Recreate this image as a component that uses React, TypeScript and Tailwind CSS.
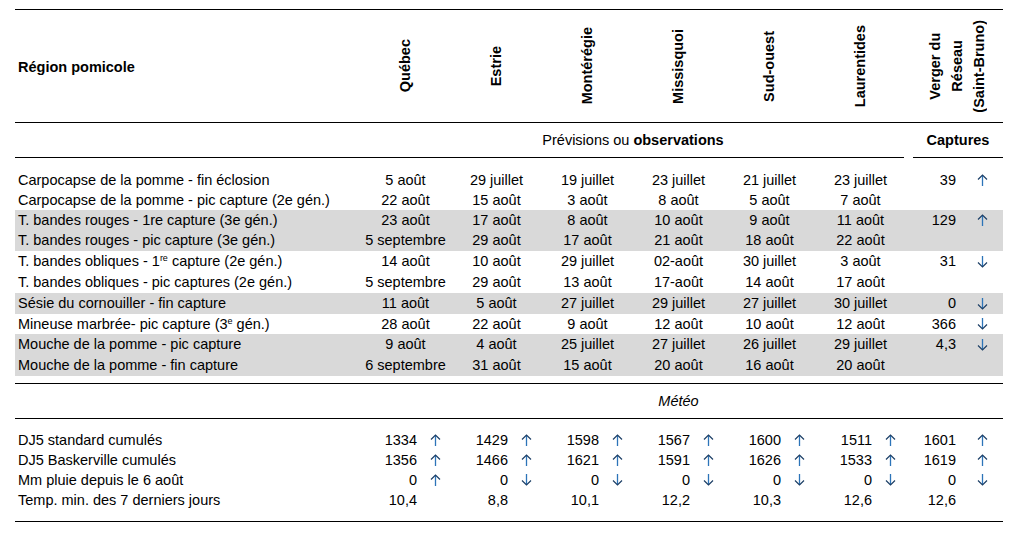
import React from "react";

const COLS = "grid grid-cols-[345px_repeat(6,91px)_97px]";

function Arrow({ dir }: { dir: "up" | "down" }) {
  return (
    <svg width="11" height="12" viewBox="0 0 11 12" className="block">
      {dir === "up" ? (
        <>
          <line x1="5.5" y1="1.2" x2="5.5" y2="12" stroke="#2c74b8" strokeWidth="1.3" />
          <polyline points="1,5.5 5.5,1 10,5.5" fill="none" stroke="#1d3f66" strokeWidth="1.2" />
        </>
      ) : (
        <>
          <line x1="5.5" y1="0" x2="5.5" y2="10.8" stroke="#2c74b8" strokeWidth="1.3" />
          <polyline points="1,6.5 5.5,11 10,6.5" fill="none" stroke="#1d3f66" strokeWidth="1.2" />
        </>
      )}
    </svg>
  );
}

type Row = {
  label: React.ReactNode;
  vals: string[];
  cap?: string;
  arrow?: "up" | "down";
  h: string;
  gray?: boolean;
};

const supCls = "text-[9px] align-baseline relative -top-[5px]";

const rows: Row[] = [
  { label: "Carpocapse de la pomme - fin éclosion", vals: ["5 août", "29 juillet", "19 juillet", "23 juillet", "21 juillet", "23 juillet"], cap: "39", arrow: "up", h: "h-[20px]" },
  { label: "Carpocapse de la pomme - pic capture (2e gén.)", vals: ["22 août", "15 août", "3 août", "8 août", "5 août", "7 août"], h: "h-[20px]" },
  { label: "T. bandes rouges - 1re capture (3e gén.)", vals: ["23 août", "17 août", "8 août", "10 août", "9 août", "11 août"], cap: "129", arrow: "up", h: "h-[20px]", gray: true },
  { label: "T. bandes rouges - pic capture (3e gén.)", vals: ["5 septembre", "29 août", "17 août", "21 août", "18 août", "22 août"], h: "h-[21px]", gray: true },
  {
    label: (
      <>
        T. bandes obliques - 1<sup className={supCls}>re</sup> capture (2e gén.)
      </>
    ),
    vals: ["14 août", "10 août", "29 juillet", "02-août", "30 juillet", "3 août"],
    cap: "31",
    arrow: "down",
    h: "h-[21px]",
  },
  { label: "T. bandes obliques - pic captures (2e gén.)", vals: ["5 septembre", "29 août", "13 août", "17-août", "14 août", "17 août"], h: "h-[21px]" },
  { label: "Sésie du cornouiller - fin capture", vals: ["11 août", "5 août", "27 juillet", "29 juillet", "27 juillet", "30 juillet"], cap: "0", arrow: "down", h: "h-[21px]", gray: true },
  {
    label: (
      <>
        Mineuse marbrée- pic capture (3<sup className={supCls}>e</sup> gén.)
      </>
    ),
    vals: ["28 août", "22 août", "9 août", "12 août", "10 août", "12 août"],
    cap: "366",
    arrow: "down",
    h: "h-[20px]",
  },
  { label: "Mouche de la pomme - pic capture", vals: ["9 août", "4 août", "25 juillet", "27 juillet", "26 juillet", "29 juillet"], cap: "4,3", arrow: "down", h: "h-[21px]", gray: true },
  { label: "Mouche de la pomme - fin capture", vals: ["6 septembre", "31 août", "15 août", "20 août", "16 août", "20 août"], h: "h-[21px]", gray: true },
];

type MRow = { label: string; vals: [string, ("up" | "down" | null)][]; h: string };

const meteo: MRow[] = [
  {
    label: "DJ5 standard cumulés",
    vals: [["1334", "up"], ["1429", "up"], ["1598", "up"], ["1567", "up"], ["1600", "up"], ["1511", "up"], ["1601", "up"]],
    h: "h-[20px]",
  },
  {
    label: "DJ5 Baskerville cumulés",
    vals: [["1356", "up"], ["1466", "up"], ["1621", "up"], ["1591", "up"], ["1626", "up"], ["1533", "up"], ["1619", "up"]],
    h: "h-[20px]",
  },
  {
    label: "Mm pluie depuis le 6 août",
    vals: [["0", "up"], ["0", "down"], ["0", "down"], ["0", "down"], ["0", "down"], ["0", "down"], ["0", "down"]],
    h: "h-[20px]",
  },
  {
    label: "Temp. min. des 7 derniers jours",
    vals: [["10,4", null], ["8,8", null], ["10,1", null], ["12,2", null], ["10,3", null], ["12,6", null], ["12,6", null]],
    h: "h-[21px]",
  },
];

const regions = ["Québec", "Estrie", "Montérégie", "Missisquoi", "Sud-ouest", "Laurentides"];

export default function App() {
  return (
    <div className="w-[1023px] h-[533px] bg-white text-black font-['Liberation_Sans',Arial,sans-serif] text-[14.5px] leading-none pt-[9px] pl-[15px]">
      <div className="w-[988px]">
        <div className="h-px bg-black" />
        {/* Header */}
        <div className={`${COLS} h-[112px] grid-rows-[112px] items-center font-bold`}>
          <div className="pl-[3px] pt-[2px]">Région pomicole</div>
          {regions.map((r) => (
            <div key={r} className="h-[112px] flex justify-center items-center">
              <div className="[writing-mode:vertical-rl] rotate-180 text-center whitespace-nowrap">{r}</div>
            </div>
          ))}
          <div className="h-[112px] flex justify-center items-center pl-[4px]">
            <div className="[writing-mode:vertical-rl] rotate-180 text-center leading-[22px] whitespace-nowrap">
              Verger du
              <br />
              Réseau
              <br />
              (Saint-Bruno)
            </div>
          </div>
        </div>
        <div className="h-px bg-black" />
        <div className={`${COLS} h-[34px] items-center`}>
          <div />
          <div className="col-span-6 text-center">
            Prévisions ou <span className="font-bold">observations</span>
          </div>
          <div className="pl-[7px] text-center font-bold">Captures</div>
        </div>
        <div className="flex h-px">
          <div className="w-[889px] bg-black" />
          <div className="w-[9px]" />
          <div className="w-[90px] bg-black" />
        </div>
        <div className="h-[12px]" />
        {rows.map((r, i) => (
          <div key={i} className={`${COLS} ${r.h} items-center ${r.gray ? "bg-[#d9d9d9]" : ""}`}>
            <div className="pl-[3px] whitespace-nowrap">{r.label}</div>
            {r.vals.map((v, j) => (
              <div key={j} className="text-center whitespace-nowrap">
                {v}
              </div>
            ))}
            <div className="flex items-center">
              <div className="w-[50px] text-right">{r.cap ?? ""}</div>
              {r.arrow && (
                <div className="ml-[21px]">
                  <Arrow dir={r.arrow} />
                </div>
              )}
            </div>
          </div>
        ))}
        <div className="h-[7px]" />
        <div className="h-px bg-black" />
        <div className={`${COLS} h-[34px] items-center`}>
          <div />
          <div />
          <div />
          <div />
          <div className="text-center italic">Météo</div>
        </div>
        <div className="h-px bg-black" />
        <div className="h-[11px]" />
        {meteo.map((m, i) => (
          <div key={i} className={`${COLS} ${m.h} items-center`}>
            <div className="pl-[3px] whitespace-nowrap">{m.label}</div>
            {m.vals.map(([v, a], j) =>
              j < 6 ? (
                <div key={j} className="flex items-center">
                  <div className="w-[57px] text-right">{v}</div>
                  {a && (
                    <div className="ml-[13px]">
                      <Arrow dir={a} />
                    </div>
                  )}
                </div>
              ) : (
                <div key={j} className="flex items-center">
                  <div className="w-[50px] text-right">{v}</div>
                  {a && (
                    <div className="ml-[21px]">
                      <Arrow dir={a} />
                    </div>
                  )}
                </div>
              )
            )}
          </div>
        ))}
        <div className="h-[10px]" />
        <div className="h-px bg-black" />
      </div>
    </div>
  );
}
